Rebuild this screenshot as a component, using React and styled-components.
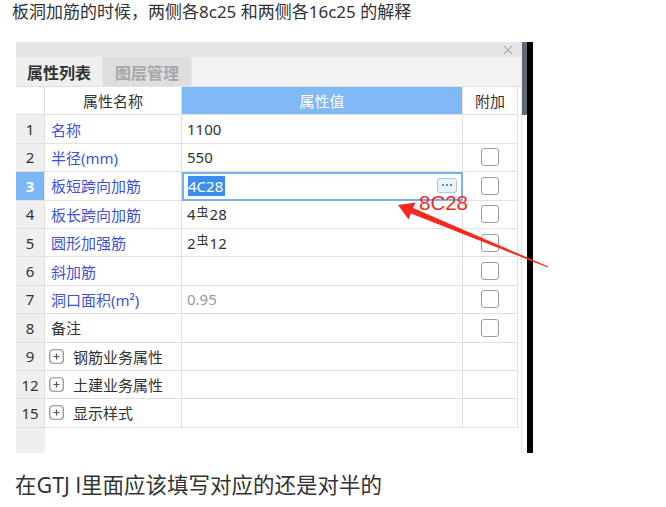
import React from "react";
import styled, { createGlobalStyle } from "styled-components";

const GlobalStyle = createGlobalStyle`
  html, body {
    margin: 0;
    padding: 0;
    background: #fff;
  }
  body {
    font-family: "Noto Sans", "Noto Sans CJK SC", sans-serif;
    color: #333;
  }
`;

const rows = [
  { no: "1", name: "名称", value: "1100" },
  { no: "2", name: "半径(mm)", value: "550", check: true },
  { no: "3", name: "板短跨向加筋", edit: "4C28", check: true, active: true },
  { no: "4", name: "板长跨向加筋", value: ["4", "28"], check: true },
  { no: "5", name: "圆形加强筋", value: ["2", "12"], check: true },
  { no: "6", name: "斜加筋", value: "", check: true },
  { no: "7", name: "洞口面积(m²)", value: "0.95", muted: true, check: true },
  { no: "8", name: "备注", value: "", plain: true, check: true },
  { no: "9", name: "钢筋业务属性", group: true },
  { no: "12", name: "土建业务属性", group: true },
  { no: "15", name: "显示样式", group: true },
];

const App = () => {
  const renderValue = (row) => {
    if (row.edit) {
      return (
        <EditBox>
          <Selected>{row.edit}</Selected>
          <DotsButton>
            <Dot />
            <Dot />
            <Dot />
          </DotsButton>
        </EditBox>
      );
    }
    if (Array.isArray(row.value)) {
      return (
        <ValueCell>
          {row.value[0]}
          <SteelMark>虫</SteelMark>
          {row.value[1]}
        </ValueCell>
      );
    }
    return <ValueCell $muted={row.muted}>{row.value}</ValueCell>;
  };

  return (
    <Page>
      <GlobalStyle />
      <Title>板洞加筋的时候，两侧各8c25 和两侧各16c25 的解释</Title>
      <Shot>
        <Panel>
          <TopBar>
            <svg width="10" height="10" viewBox="0 0 10 10">
              <path d="M1 1 L9 9 M9 1 L1 9" stroke="#b4b4b4" strokeWidth="1.3" />
            </svg>
          </TopBar>
          <Tabs>
            <Tab $active>属性列表</Tab>
            <Tab>图层管理</Tab>
          </Tabs>
          <Grid>
            <HeadCell />
            <HeadCell>属性名称</HeadCell>
            <HeadCell $blue>属性值</HeadCell>
            <HeadCell>附加</HeadCell>
            {rows.map((row) => (
              <React.Fragment key={row.no}>
                <NumCell $active={row.active}>{row.no}</NumCell>
                <NameCell $dark={row.plain || row.group}>
                  {row.group && (
                    <PlusIcon width="15" height="15" viewBox="0 0 15 15">
                      <rect x="0.75" y="0.75" width="13.5" height="13.5" rx="3" fill="#fff" stroke="#8a8a8a" strokeWidth="1.2" />
                      <path d="M4.5 7.5 H10.5 M7.5 4.5 V10.5" stroke="#555" strokeWidth="1.2" />
                    </PlusIcon>
                  )}
                  {row.name}
                </NameCell>
                {renderValue(row)}
                <CheckCell>{row.check && <CheckBox />}</CheckCell>
              </React.Fragment>
            ))}
          </Grid>
          <Filler>
            <FillerNum />
          </Filler>
        </Panel>
        <ScrollTrack>
          <ScrollThumb />
        </ScrollTrack>
        <DarkEdge />
      </Shot>
      <Footer>在GTJ l里面应该填写对应的还是对半的</Footer>
      <Note>8C28</Note>
      <Overlay width="666" height="507" viewBox="0 0 666 507">
        <polygon
          points="398,205 415.5,202.4 413.1,208 548.3,266.6 547.7,267.4 410.9,213.5 408.6,219.5"
          fill="#f52a1e"
        />
      </Overlay>
    </Page>
  );
};

const Page = styled.div`
  position: relative;
  width: 666px;
  height: 507px;
  overflow: hidden;
  display: flex;
  flex-direction: column;
`;

const Title = styled.div`
  font-size: 17px;
  line-height: 24px;
  color: #333;
  margin: 0 0 18px 12px;
  white-space: nowrap;
`;

const Shot = styled.div`
  display: flex;
  margin-left: 16px;
  height: 411px;
`;

const Panel = styled.div`
  width: 505px;
  border-right: 1px solid #e4e4e4;
  display: flex;
  flex-direction: column;
  background: #fff;
`;

const TopBar = styled.div`
  height: 15px;
  background: #e6e6e6;
  display: flex;
  align-items: center;
  justify-content: flex-end;
  padding-right: 8px;
`;

const Tabs = styled.div`
  height: 30px;
  background: #f2f2f2;
  display: flex;
  border-bottom: 1px solid #e2e2e2;
  box-sizing: border-box;
`;

const Tab = styled.div`
  width: ${(p) => (p.$active ? "87px" : "89px")};
  display: flex;
  align-items: center;
  justify-content: center;
  font-family: "Noto Sans CJK SC", sans-serif;
  font-size: 16px;
  font-weight: 700;
  color: ${(p) => (p.$active ? "#333" : "#a8a8a8")};
  background: ${(p) => (p.$active ? "#efefef" : "#dedede")};
  border-right: 1px solid #e8e8e8;
  box-sizing: border-box;
`;

const Grid = styled.div`
  display: grid;
  grid-template-columns: 29px 137px 281px 55px;
  grid-auto-rows: 28.4px;
  width: 502px;
  font-size: 15px;
`;

const Cell = styled.div`
  display: flex;
  align-items: center;
  border-right: 1px solid #e0e0e0;
  border-bottom: 1px solid #e0e0e0;
  box-sizing: border-box;
  white-space: nowrap;
  overflow: hidden;
`;

const HeadCell = styled(Cell)`
  justify-content: center;
  font-family: "Noto Sans CJK SC", sans-serif;
  background: ${(p) => (p.$blue ? "#80b9f5" : "#fff")};
  color: ${(p) => (p.$blue ? "#fff" : "#333")};
`;

const NumCell = styled(Cell)`
  justify-content: center;
  background: ${(p) => (p.$active ? "#7db6f4" : "#efefef")};
  color: ${(p) => (p.$active ? "#fff" : "#333")};
  font-weight: ${(p) => (p.$active ? 700 : 400)};
`;

const NameCell = styled(Cell)`
  padding-left: 6px;
  gap: 9px;
  color: ${(p) => (p.$dark ? "#333" : "#3f52d6")};
`;

const PlusIcon = styled.svg`
  margin-left: -2px;
  flex: none;
`;

const ValueCell = styled(Cell)`
  padding-left: 5px;
  color: ${(p) => (p.$muted ? "#9a9a9a" : "#333")};
`;

const SteelMark = styled.span`
  font-family: "Noto Sans CJK SC", sans-serif;
  font-size: 12px;
  position: relative;
  top: -3px;
  margin: 0 1px;
`;

const EditBox = styled(Cell)`
  border: 2px solid #78b0ec;
  padding-left: 4px;
  justify-content: space-between;
  padding-right: 4px;
`;

const Selected = styled.span`
  background: #3a8ef0;
  color: #fff;
  line-height: 20px;
  padding-right: 2px;
`;

const DotsButton = styled.div`
  width: 20px;
  height: 15px;
  box-sizing: border-box;
  border: 1px solid #a6c7ee;
  background: #eaf2fc;
  border-radius: 3px;
  display: flex;
  align-items: center;
  justify-content: center;
  gap: 2px;
  margin-top: -2px;
`;

const Dot = styled.span`
  width: 2px;
  height: 2px;
  background: #4a8fe0;
`;

const CheckCell = styled(Cell)`
  justify-content: center;
`;

const CheckBox = styled.div`
  width: 18px;
  height: 18px;
  box-sizing: border-box;
  border: 1.5px solid #9c9c9c;
  border-radius: 3px;
  background: #fff;
`;

const Filler = styled.div`
  flex: 1;
  display: flex;
`;

const FillerNum = styled.div`
  width: 29px;
  background: #efefef;
`;

const ScrollTrack = styled.div`
  width: 5px;
  background: #fff;
`;

const ScrollThumb = styled.div`
  height: 73px;
  background: #626972;
`;

const DarkEdge = styled.div`
  width: 6px;
  background: #000;
`;

const Footer = styled.div`
  font-size: 21.5px;
  line-height: 28px;
  color: #333;
  margin: 18px 0 0 15px;
  white-space: nowrap;
`;

const Note = styled.div`
  position: absolute;
  left: 419px;
  top: 191px;
  font-family: "Liberation Sans", sans-serif;
  font-size: 20.5px;
  line-height: 24px;
  color: #f52a1e;
`;

const Overlay = styled.svg`
  position: absolute;
  left: 0;
  top: 0;
  pointer-events: none;
`;

export default App;
